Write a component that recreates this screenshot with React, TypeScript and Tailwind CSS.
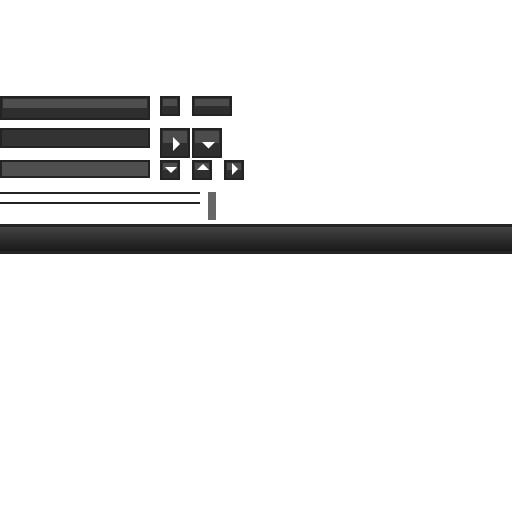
import React from "react";

function Btn({ w, h, band, children }: { w: string; h: string; band: string; children?: React.ReactNode }) {
  return (
    <div className={`${w} ${h} relative border-2 border-[#232323] bg-[#2e2e2e] flex flex-col`}>
      <div className={`${band} mx-px mt-px bg-[#4c4c4c]`} />
      {children}
    </div>
  );
}

export default function App() {
  return (
    <div className="w-[512px] h-[512px] bg-white flex flex-col pt-[96px]">
      {/* row 1 */}
      <div className="flex items-start h-[24px]">
        <div className="w-[150px] h-[24px] border-2 border-[#232323] bg-[#2e2e2e] flex flex-col">
          <div className="h-[9px] mx-px mt-px bg-[#4e4e4e]" />
        </div>
        <div className="ml-[10px]">
          <Btn w="w-[20px]" h="h-[20px]" band="h-[7px]" />
        </div>
        <div className="ml-[12px]">
          <Btn w="w-[40px]" h="h-[20px]" band="h-[7px]" />
        </div>
      </div>
      {/* row 2 */}
      <div className="flex items-start mt-[8px] h-[30px]">
        <div className="w-[150px] h-[20px] border-2 border-[#232323] bg-[#333333]" />
        <div className="ml-[10px]">
          <Btn w="w-[30px]" h="h-[30px]" band="h-[12px]">
            <svg className="absolute left-[11px] top-[7px]" width="8" height="14" viewBox="0 0 8 14">
              <polygon points="0,0 7,7 0,14" fill="#ffffff" />
            </svg>
          </Btn>
        </div>
        <div className="ml-[2px]">
          <Btn w="w-[30px]" h="h-[30px]" band="h-[12px]">
            <svg className="absolute left-[8px] top-[12px]" width="13" height="7" viewBox="0 0 13 7">
              <polygon points="0,0 13,0 6.5,6.5" fill="#ffffff" />
            </svg>
          </Btn>
        </div>
      </div>
      {/* row 3 */}
      <div className="flex items-start mt-[2px] h-[20px]">
        <div className="w-[150px] h-[18px] border-2 border-[#232323] bg-[#4f4f4f]" />
        <div className="ml-[10px]">
          <Btn w="w-[20px]" h="h-[20px]" band="h-[7px]">
            <svg className="absolute left-[3px] top-[5px]" width="12" height="6" viewBox="0 0 12 6">
              <polygon points="0,0 12,0 6,6" fill="#ffffff" />
            </svg>
          </Btn>
        </div>
        <div className="ml-[12px]">
          <Btn w="w-[20px]" h="h-[20px]" band="h-[7px]">
            <svg className="absolute left-[3px] top-[2px]" width="12" height="6" viewBox="0 0 12 6">
              <polygon points="6,0 12,6 0,6" fill="#ffffff" />
            </svg>
          </Btn>
        </div>
        <div className="ml-[12px]">
          <Btn w="w-[20px]" h="h-[20px]" band="h-[7px]">
            <svg className="absolute left-[6px] top-[1px]" width="6" height="12" viewBox="0 0 6 12">
              <polygon points="0,0 6,6 0,12" fill="#ffffff" />
            </svg>
          </Btn>
        </div>
      </div>
      {/* row 4 */}
      <div className="flex items-start mt-[12px] h-[28px]">
        <div className="w-[200px] flex flex-col">
          <div className="h-[2px] bg-[#222222]" />
          <div className="h-[2px] mt-[8px] bg-[#222222]" />
        </div>
        <div className="ml-[8px] w-[8px] h-[28px] bg-[#666666]" />
      </div>
      {/* big bar */}
      <div className="mt-[4px] w-[512px] h-[30px] border-y-[3px] border-[#242424] bg-gradient-to-b from-[#444444] to-[#1a1a1a]" />
    </div>
  );
}
